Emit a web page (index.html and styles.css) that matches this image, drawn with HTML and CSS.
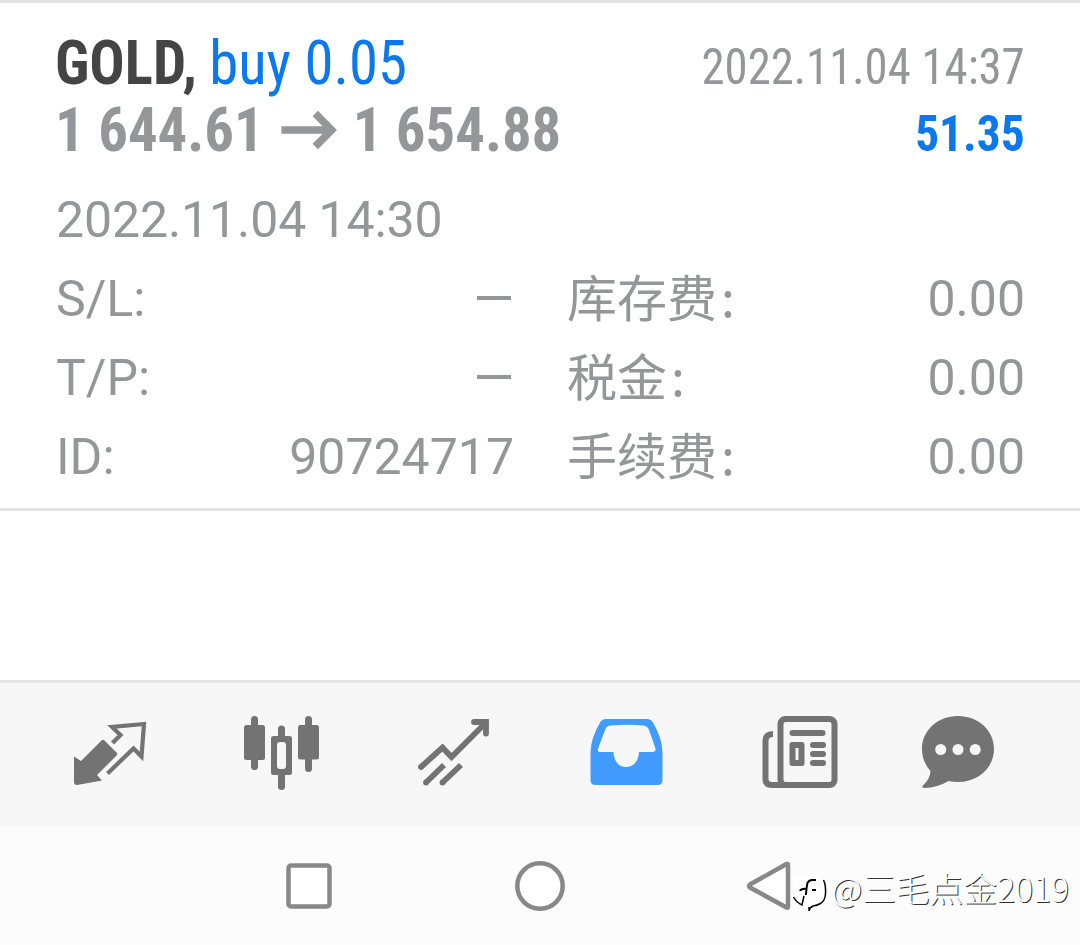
FILE: index.html
```html
<!DOCTYPE html>
<html lang="zh-CN">
<head>
<meta charset="utf-8">
<title>GOLD</title>
<link rel="stylesheet" href="styles.css">
</head>
<body>
<main class="screen">
  <section class="deal">
    <header class="summary">
      <div class="line">
        <div class="big"><span class="symbol">GOLD,</span><span class="side">buy 0.05</span></div>
        <span class="time">2022.11.04 14:37</span>
      </div>
      <div class="line">
        <div class="big"><span class="price open">1 644.61</span><svg class="arrow" width="61" height="40" viewBox="280 111 58 40" preserveAspectRatio="none"><path d="M281 131H332M315 114.500L331.500 131L315 147.500" fill="none" stroke="#95969a" stroke-width="7.500"/></svg><span class="price close">1 654.88</span></div>
        <span class="profit">51.35</span>
      </div>
    </header>
    <div class="details">
      <div class="row"><span class="opened">2022.11.04 14:30</span></div>
      <div class="row"><span>S/L:</span><span class="dash"></span><span class="fee">库存费<i class="colon">:</i></span><span class="amount">0.00</span></div>
      <div class="row"><span>T/P:</span><span class="dash"></span><span class="fee">税金<i class="colon">:</i></span><span class="amount">0.00</span></div>
      <div class="row"><span>ID:</span><span class="number">90724717</span><span class="fee">手续费<i class="colon">:</i></span><span class="amount">0.00</span></div>
    </div>
  </section>
  <div class="empty"></div>
  <nav class="tabs">
    <svg class="tab" viewBox="60 710 100 90"><path d="M74 756.500L81 761L101.500 740.500Q103 739 104.500 740.500L116.500 752.500Q118 754 116.500 755.500L97 775L102 780.500L77 785Q74 785 74 782Z" fill="#737373"/><path d="M112.500 743L120.500 735L112 727L144 724L141.500 756.500L133.500 748.500L107.500 773.500" fill="none" stroke="#737373" stroke-width="4.200"/></svg>
    <svg class="tab" viewBox="232 710 100 90"><g fill="#737373"><rect x="251" y="716" width="7" height="54" rx="3.500"/><rect x="244" y="725" width="21" height="35" rx="2.500"/><rect x="305" y="716" width="7" height="56" rx="3.500"/><rect x="298" y="725" width="21" height="34.500" rx="2.500"/><rect x="278" y="725.500" width="7" height="64.500" rx="3.500"/><rect x="271" y="736" width="21" height="39" rx="2.500"/></g><rect x="277" y="742" width="9" height="27" rx="3" fill="#f7f7f7"/></svg>
    <svg class="tab" viewBox="404 710 100 90"><g fill="none" stroke="#737373" stroke-width="5.800"><path d="M421 767L442.500 747.500L451.500 757L486 722.500" stroke-linecap="round"/><path d="M474 722H486V733.500" stroke-linecap="round"/><path d="M444 765L426 782.500M461 765L442.500 782.500"/></g><g fill="#737373"><circle cx="426" cy="782.500" r="2.900"/><circle cx="442.500" cy="782.500" r="2.900"/></g></svg>
    <svg class="tab" viewBox="576 710 100 90"><path fill="#429bff" fill-rule="evenodd" d="M606 719H647Q651 719 653 722.500Q662 738 662.500 752V780Q662.500 785 657.500 785H595.500Q590.500 785 590.500 780V752Q591 738 600 722.500Q602 719 606 719ZM610 725.500Q606.500 726 605.500 729L598 748.500Q597.300 752 600.500 752H613.500C614 762 619 767 626 767S638.500 762 639 752H652.500Q656 752 655.500 748.500L649 730Q647.500 726 643.500 725.500Q627 724 610 725.500Z"/></svg>
    <svg class="tab" viewBox="748 710 100 90"><g fill="none" stroke="#737373" stroke-width="6"><rect x="780.500" y="719" width="54" height="66" rx="5"/><path d="M773 734Q765.500 734 765.500 741V779Q765.500 785 772 785H784"/></g><g fill="#737373"><rect x="789.500" y="730" width="36" height="6" rx="3"/><path fill-rule="evenodd" d="M792 742H802Q804.500 742 804.500 745V763Q804.500 766 802 766H792Q789.500 766 789.500 763V745Q789.500 742 792 742ZM795.500 748V760H798.500V748Z"/><rect x="810" y="742" width="16" height="6" rx="3"/><rect x="810" y="751" width="16" height="6" rx="3"/><rect x="810" y="760" width="16" height="6" rx="3"/></g></svg>
    <svg class="tab" viewBox="920 710 100 90"><path fill="#737373" d="M958 716C978.500 716 994 730.500 994 749S978.500 782 958 782Q953 782 948.500 781Q938 787.500 924 788Q921 787.500 923 785.500Q930 779 930.500 771Q922 761.500 922 749C922 730.500 937.500 716 958 716Z"/><g fill="#f7f7f7"><circle cx="940.700" cy="749.500" r="5.500"/><circle cx="958" cy="749.500" r="5.500"/><circle cx="975.200" cy="749.500" r="5.500"/></g></svg>
  </nav>
  <div class="system">
    <svg class="key" viewBox="0 0 60 60"><rect x="9.500" y="9.500" width="41" height="41" rx="2.500"/></svg>
    <svg class="key" viewBox="0 0 60 60"><circle cx="30" cy="30" r="22.700"/></svg>
    <svg class="key" viewBox="0 0 60 60"><path d="M45.500 8Q47 7 47 9V50.500Q47 52.500 45.500 51.500L9 31.500Q7 30 9 28.500Z"/></svg>
    <div class="watermark">
      <svg class="mark" width="36" height="42" viewBox="791 872 36 42"><path d="M792 888Q792 874 808 874Q824 876 824.500 891Q824 906 811 906Q808 908 807 912V907Q792 905 792 888Z" fill="#fff"/><path d="M822.500 881Q825 886 824.500 895Q824 902 819.500 904.500Q816 906.500 812 907Q808.500 908.500 808 912V908M792.500 898Q795.500 903.500 801 906L803 897" fill="none" stroke="#000" stroke-width="1.500"/><path d="M815 881H811Q806.500 881.500 806 886L804.800 896M799 892Q800 889.500 805 889.800M811 891H815" fill="none" stroke="#000" stroke-width="2"/></svg>
      <span class="author">@三毛点金2019</span>
    </div>
  </div>
</main>
</body>
</html>
```
FILE: styles.css
```css
* { box-sizing: border-box; }
body { margin: 0; background: #fff; }
.screen {
  width: 1080px;
  height: 945px;
  display: flex;
  flex-direction: column;
  font-family: "Roboto", "Noto Sans CJK SC", sans-serif;
  color: #95969a;
  overflow: hidden;
}
.deal {
  height: 511px;
  border-top: 3px solid #e4e4e4;
  border-bottom: 3px solid #e4e4e4;
  padding: 26px 55px 0;
}
.line {
  display: flex;
  justify-content: space-between;
  align-items: baseline;
  height: 67px;
  line-height: 67px;
  white-space: pre;
  font-family: "Roboto Condensed", "Roboto", sans-serif;
  font-stretch: 75%;
}
.big { font-size: 62px; display: flex; align-items: baseline; transform: scaleX(0.947); transform-origin: left; }
.symbol { font-weight: 700; color: #444; margin-right: 13px; }
.side { color: #0b78ed; }
.price { font-weight: 700; }
.arrow { margin: 0 15px 0 18px; align-self: center; }
.time { font-size: 50px; transform: scaleX(0.935); transform-origin: right; }
.profit { font-size: 50px; font-weight: 700; color: #0b78ed; transform: scaleX(0.947); transform-origin: right; }
.details { margin-top: 17px; font-size: 50px; }
.row {
  display: grid;
  grid-template-columns: 114px 344px 1fr 200px;
  align-items: start;
  height: 79px;
  line-height: 80px;
  white-space: nowrap;
  padding-left: 1px;
}
.opened { letter-spacing: -0.1px; }
.dash { justify-self: end; width: 34px; height: 4px; margin: 37px 3px 0 0; background: #95969a; }
.number { justify-self: end; }
.fee { padding-left: 53px; font-family: "Noto Sans CJK SC", sans-serif; line-height: 73px; }
.colon { font-style: normal; margin-left: 4px; }
.amount { justify-self: end; }
.empty { height: 169px; }
.tabs {
  height: 147px;
  border-top: 3px solid #e4e4e4;
  background: #f7f7f7;
  padding: 0 24px;
  display: grid;
  grid-template-columns: repeat(6, 172px);
  place-items: center;
}
.tab { width: 100px; height: 90px; }
.system {
  position: relative;
  height: 118px;
  background: #fcfcfc;
  display: flex;
  justify-content: center;
  align-items: center;
  gap: 171px;
}
.key { width: 60px; height: 60px; fill: #fff; stroke: #888; stroke-width: 4.5; }
.watermark { position: absolute; right: 11px; top: 44px; display: flex; align-items: center; }
.author {
  font: 300 33.7px/38px "Noto Sans CJK SC", sans-serif;
  color: #fff;
  text-shadow: 1px 1px 0 #333;
  white-space: nowrap;
  margin: -9px 0 0 4px;
}
```
